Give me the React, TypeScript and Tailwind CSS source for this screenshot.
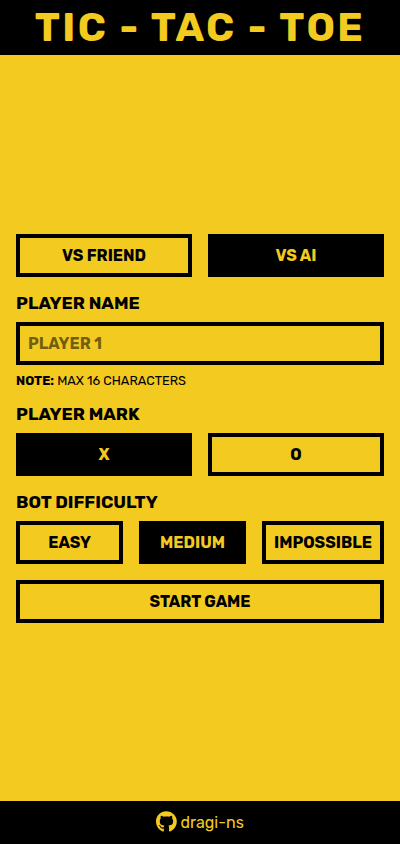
import { useState } from "react";
import { FaGithub } from "react-icons/fa";

const base =
  "flex h-[43px] items-center justify-center border-4 border-black px-2 text-[16px] leading-[19px] font-bold whitespace-nowrap";

function Choice({ label, active, onClick }: { label: string; active?: boolean; onClick?: () => void }) {
  return (
    <button type="button" onClick={onClick} className={`${base} ${active ? "bg-black text-[#f3ca20]" : "text-black"}`}>
      {label}
    </button>
  );
}

function Label({ children }: { children: string }) {
  return <h2 className="mb-2 h-[21px] text-[17.6px] leading-[21px] font-bold whitespace-nowrap">{children}</h2>;
}

export default function App() {
  const [mode, setMode] = useState("ai");
  const [mark, setMark] = useState("X");
  const [level, setLevel] = useState("medium");
  return (
    <div className="flex h-screen min-h-[844px] flex-col bg-[#f3ca20] font-[Rubik,Roboto,sans-serif] text-black">
      <header className="flex h-[55px] items-center justify-center bg-black text-[#f3ca20]">
        <h1 className="text-[40px] leading-[47px] font-bold tracking-[2.45px] whitespace-nowrap">TIC - TAC - TOE</h1>
      </header>
      <main className="flex flex-1 flex-col justify-center gap-4 px-4">
        <div className="grid grid-cols-2 gap-4">
          <Choice label="VS FRIEND" active={mode === "friend"} onClick={() => setMode("friend")} />
          <Choice label="VS AI" active={mode === "ai"} onClick={() => setMode("ai")} />
        </div>
        <section>
          <Label>PLAYER NAME</Label>
          <input
            maxLength={16}
            placeholder="PLAYER 1"
            className="block h-[43px] w-full border-4 border-black bg-transparent px-2 text-[16px] font-bold outline-none placeholder:text-black/54"
          />
          <p className="mt-2 h-[15px] text-[12.75px] leading-[15px] whitespace-nowrap">
            <b>NOTE:</b> MAX 16 CHARACTERS
          </p>
        </section>
        <section>
          <Label>PLAYER MARK</Label>
          <div className="grid grid-cols-2 gap-4">
            <Choice label="X" active={mark === "X"} onClick={() => setMark("X")} />
            <Choice label="O" active={mark === "O"} onClick={() => setMark("O")} />
          </div>
        </section>
        <section>
          <Label>BOT DIFFICULTY</Label>
          <div className="grid grid-cols-[107px_107px_122px] gap-4">
            <Choice label="EASY" active={level === "easy"} onClick={() => setLevel("easy")} />
            <Choice label="MEDIUM" active={level === "medium"} onClick={() => setLevel("medium")} />
            <Choice label="IMPOSSIBLE" active={level === "impossible"} onClick={() => setLevel("impossible")} />
          </div>
        </section>
        <Choice label="START GAME" />
      </main>
      <footer className="flex h-[43px] items-center justify-center bg-black text-[#f3ca20]">
        <a className="flex items-center gap-[3.5px] text-[16px]">
          <FaGithub className="mb-[2px] h-[21.5px] w-[20.8px]" />
          <span>dragi-ns</span>
        </a>
      </footer>
    </div>
  );
}
